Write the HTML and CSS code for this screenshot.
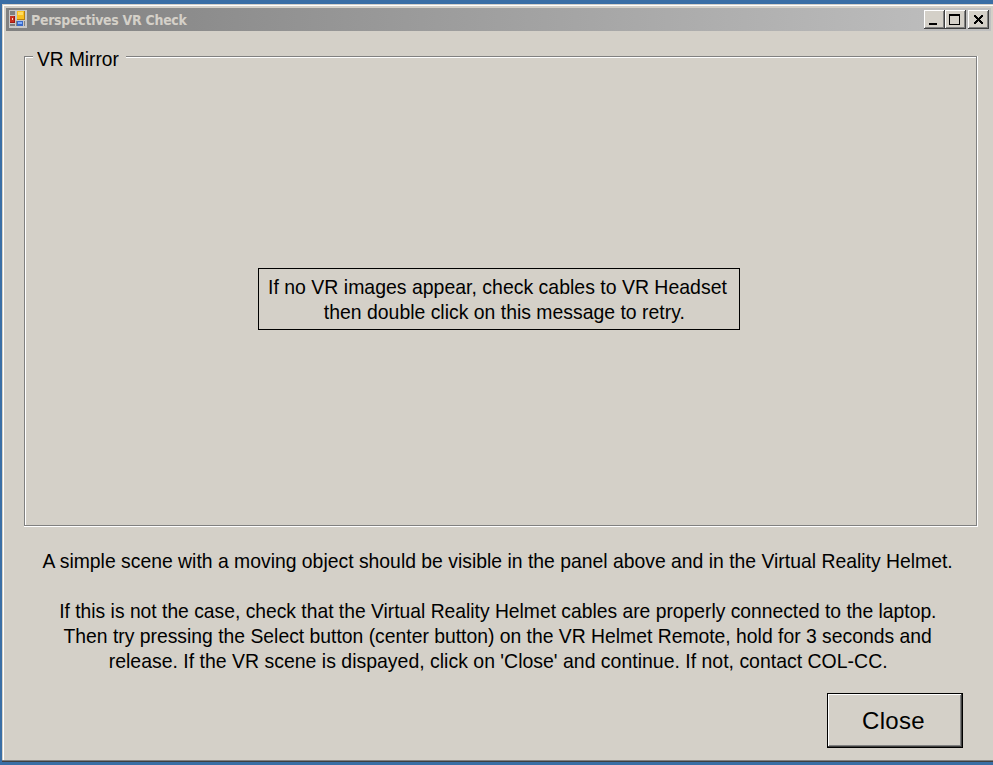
FILE: index.html
```
<!DOCTYPE html>
<html lang="en">
<head>
<meta charset="utf-8">
<title>Perspectives VR Check</title>
<link rel="stylesheet" href="styles.css">
</head>
<body>
<main class="window">
  <header class="titlebar">
    <svg class="app-icon" width="18" height="18" viewBox="0 0 18 18" shape-rendering="crispEdges">
      <path fill="#c8c8c8" d="M0 0h18v18H0z"/>
      <path fill="#808080" d="M1 1h5v4H1zM1 14h5v2H1zM7 11h1v5H7zM15 11h1v5h-1z"/>
      <path fill="#a01810" d="M1 6h5v7H1z"/><path fill="#c83020" d="M1 6h4v6H1z"/><path fill="#ffd0c0" d="M3 8h1v2H3z"/>
      <path fill="#b88010" d="M8 1h8v9H8z"/><path fill="#f8c020" d="M8 1h7v8H8z"/><path fill="#ffdc60" d="M9 2h5v3H9z"/>
      <path fill="#3868c8" d="M8 11h6v5H8z"/><path fill="#80b0ff" d="M9 12h4v2H9z"/>
    </svg>
    <h1 class="title">Perspectives VR Check</h1>
    <div class="controls">
      <button class="control" aria-label="Minimize"><svg width="21" height="19" shape-rendering="crispEdges"><path d="M5 13h8v2H5z"/></svg></button>
      <button class="control" aria-label="Maximize"><svg width="21" height="19" shape-rendering="crispEdges"><path fill-rule="evenodd" d="M4 4h11v11H4zM5 6v8h9V6z"/></svg></button>
      <button class="control control-close" aria-label="Close window"><svg width="21" height="19" shape-rendering="crispEdges"><path d="M6 5h2v1H6zM13 5h2v1h-2zM6 6h3v1H6zM12 6h3v1h-3zM7 7h3v1H7zM11 7h3v1h-3zM8 8h5v1H8zM9 9h3v1H9zM8 10h5v1H8zM7 11h3v1H7zM11 11h3v1h-3zM6 12h3v1H6zM12 12h3v1h-3zM6 13h2v1H6zM13 13h2v1h-2z"/></svg></button>
    </div>
  </header>
  <fieldset class="mirror">
    <legend class="legend"><span class="legend-text">VR Mirror</span></legend>
    <div class="message"><span class="m1">If no VR images appear, check cables to VR Headset</span><span class="m2">then double click on this message to retry.</span></div>
  </fieldset>
  <section class="instructions">
    <p class="line l1">A simple scene with a moving object should be visible in the panel above and in the Virtual Reality Helmet.</p>
    <p class="line l2">If this is not the case, check that the Virtual Reality Helmet cables are properly connected to the laptop.</p>
    <p class="line l3">Then try pressing the Select button (center button) on the VR Helmet Remote, hold for 3 seconds and</p>
    <p class="line l4">release. If the VR scene is dispayed, click on 'Close' and continue. If not, contact COL-CC.</p>
  </section>
  <footer class="actions"><button class="close-button">Close</button></footer>
</main>
</body>
</html>
```
FILE: styles.css
```
* { box-sizing: border-box; }
body {
  margin: 0;
  padding: 4px 0 3px 2px;
  height: 765px;
  overflow: hidden;
  background: #3a6ea5;
  color: #000;
  font-family: "Liberation Sans", Arial, sans-serif;
  font-size: 21px;
  line-height: 25px;
}
.window {
  width: 991px;
  height: 758px;
  padding: 4px 2px 0 4px;
  background: #d4d0c8;
  box-shadow: inset 0 -1px #404040, inset 0 -2px #808080, inset 1px 1px #d4d0c8, inset 2px 2px #fff;
}
.titlebar {
  display: flex;
  height: 23px;
  padding: 2px 2px 0 3px;
  background: linear-gradient(90deg, #808080, #c0c0c0);
}
.app-icon { display: block; }
.title {
  margin: 0 0 0 4px;
  color: #d4d0c8;
  font: bold 14px/20px "DejaVu Sans Condensed", "DejaVu Sans", sans-serif;
  font-stretch: condensed;
  white-space: nowrap;
  letter-spacing: -0.3px;
}
.controls { display: flex; margin-left: auto; }
.control {
  width: 21px;
  height: 19px;
  padding: 0;
  border: 0;
  background: #d4d0c8;
  box-shadow: inset -1px -1px #404040, inset 1px 1px #fff, inset -2px -2px #808080;
}
.control svg { display: block; }
.control-close { margin-left: 2px; }
.mirror {
  position: relative;
  display: flex;
  align-items: center;
  justify-content: center;
  width: 954px;
  height: 471px;
  margin: 25px 0 0 18px;
  padding: 0 4px 0 0;
  border: 0;
  box-shadow: inset -1px -1px #fff, inset -2px -2px #808080, inset 1px 1px #808080, inset 2px 2px #fff;
}
.legend {
  position: absolute;
  left: 9px;
  top: -10px;
  width: 93px;
  padding: 0 0 0 4px;
  background: #d4d0c8;
  white-space: nowrap;
}
.legend-text {
  display: inline-block;
  transform: scaleX(0.911);
  transform-origin: left;
}
.message {
  display: flex;
  flex-direction: column;
  align-items: center;
  width: 482px;
  height: 62px;
  margin-top: 15px;
  padding-top: 5px;
  border: 1px solid #000;
  white-space: nowrap;
}
.m1 { margin-right: 3px; transform: scaleX(0.927); }
.m2 { margin-left: 10px; transform: scaleX(0.924); }
.instructions {
  display: flex;
  flex-direction: column;
  align-items: center;
  margin-top: 21px;
  padding-right: 1px;
  white-space: nowrap;
}
.line { margin: 0; }
.l1 { margin-bottom: 25px; transform: scaleX(0.922); }
.l2 { transform: scaleX(0.918); }
.l3 { transform: scaleX(0.9205); }
.l4 { transform: scaleX(0.927); }
.actions {
  display: flex;
  justify-content: flex-end;
  margin-top: 20px;
  padding-right: 28px;
}
.close-button {
  width: 136px;
  height: 55px;
  padding: 0 3px 0 0;
  border: 1px solid #000;
  background: #d4d0c8;
  color: #000;
  font: 24px "Liberation Sans", Arial, sans-serif;
  letter-spacing: 0.3px;
  box-shadow: inset -1px -1px #404040, inset 1px 1px #fff, inset -2px -2px #808080;
}
```
